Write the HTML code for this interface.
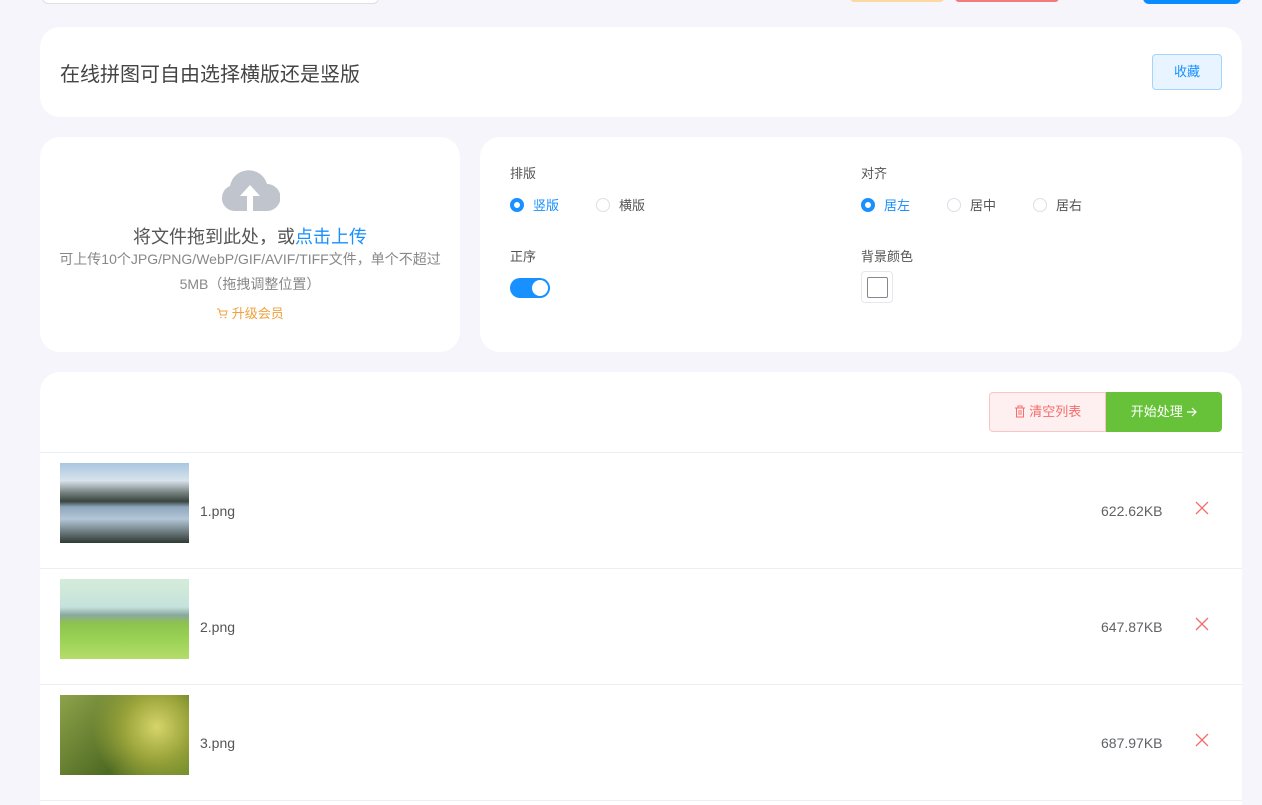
<!DOCTYPE html>
<html><head><meta charset="utf-8"><style>
*{box-sizing:border-box;margin:0;padding:0}
html{width:1262px;height:805px;overflow:hidden}
body{width:1262px;height:805px;overflow:hidden;background:#f5f5fb;font-family:"Liberation Sans","Noto Sans CJK SC",sans-serif;color:#333;position:relative}
.a{position:absolute}
.card{position:absolute;background:#fff;border-radius:20px}
.lbl{font-size:13px;color:#555}
.radio{position:absolute;font-size:13px;color:#555;display:flex;align-items:center;gap:9px}
.radio i{display:inline-block;width:14px;height:14px;border-radius:50%;border:1px solid #dcdfe6;background:#fff}
.radio.on{color:#1890ff}
.radio.on i{border:4px solid #1890ff;background:#fff}
.row{position:absolute;left:40px;width:1202px;height:116px;border-top:1px solid #ebeef5;background:#fff}
.row .img{position:absolute;left:20px;top:10px;width:129px;height:80px}
.row .nm{position:absolute;left:160px;top:50px;font-size:14px;color:#555}
.row .sz{position:absolute;left:1061px;top:50px;font-size:14px;color:#606266}
.row .x{position:absolute;left:1155px;top:48px}
</style></head><body>
<div class="a" style="left:42px;top:-20px;width:337px;height:24px;border:1px solid #dcdfe6;border-radius:6px;background:#fff"></div>
<div class="a" style="left:850px;top:-10px;width:94px;height:12px;background:#fcd9a2;border-radius:4px"></div>
<div class="a" style="left:955px;top:-10px;width:104px;height:12px;background:#f17a7a;border-radius:4px"></div>
<div class="a" style="left:1143px;top:-10px;width:98px;height:14px;background:#0a8cff;border-radius:6px"></div>

<div class="card" style="left:40px;top:27px;width:1202px;height:90px">
  <div class="a" style="left:20px;top:31px;font-size:20px;color:#444">在线拼图可自由选择横版还是竖版</div>
  <div class="a" style="left:1112px;top:27px;width:70px;height:36px;border:1px solid #a3d3ff;background:#e8f4ff;border-radius:4px;color:#1890ff;font-size:13px;text-align:center;line-height:34px">收藏</div>
</div>

<div class="card" style="left:40px;top:137px;width:420px;height:215px">
  <svg class="a" style="left:180px;top:30px" width="60" height="46" viewBox="0 0 60 46"><path d="M14 44 A13 13 0 0 1 10 19 A19 19 0 0 1 47 17 A13.5 13.5 0 0 1 47 44 Z" fill="#c0c4cc"/><path d="M30 18 L20 29 H27 V46 H33 V29 H40 Z" fill="#fff"/></svg>
  <div class="a" style="left:0;width:420px;top:86px;text-align:center;font-size:18px;color:#555">将文件拖到此处，或<span style="color:#1890ff">点击上传</span></div>
  <div class="a" style="left:0;width:420px;top:110px;text-align:center;font-size:14px;color:#888;line-height:25px">可上传10个JPG/PNG/WebP/GIF/AVIF/TIFF文件，单个不超过<br>5MB（拖拽调整位置）</div>
  <div class="a" style="left:0;width:420px;top:166px;text-align:center;font-size:13px;color:#f0a03c"><svg width="12" height="12" viewBox="0 0 12 12" style="vertical-align:-1px"><path d="M1 2H3L4.5 8H10L11 4H4" fill="none" stroke="#f0a03c" stroke-width="1"/><circle cx="5" cy="10.5" r=".8" fill="#f0a03c"/><circle cx="9.5" cy="10.5" r=".8" fill="#f0a03c"/></svg> 升级会员</div>
</div>

<div class="card" style="left:480px;top:137px;width:762px;height:215px">
  <div class="a lbl" style="left:30px;top:26px">排版</div>
  <div class="radio on" style="left:30px;top:58px"><i></i>竖版</div>
  <div class="radio" style="left:116px;top:58px"><i></i>横版</div>
  <div class="a lbl" style="left:30px;top:109px">正序</div>
  <div class="a" style="left:30px;top:141px;width:40px;height:20px;border-radius:10px;background:#1890ff"><div class="a" style="left:22px;top:2px;width:16px;height:16px;border-radius:50%;background:#fff"></div></div>
  <div class="a lbl" style="left:381px;top:26px">对齐</div>
  <div class="radio on" style="left:381px;top:58px"><i></i>居左</div>
  <div class="radio" style="left:467px;top:58px"><i></i>居中</div>
  <div class="radio" style="left:553px;top:58px"><i></i>居右</div>
  <div class="a lbl" style="left:381px;top:109px">背景颜色</div>
  <div class="a" style="left:381px;top:134px;width:32px;height:32px;border:1px solid #e4e7ed;border-radius:4px;background:#fff"><div class="a" style="left:5px;top:5px;width:21px;height:21px;border:1px solid #888;border-radius:2px"></div></div>
</div>

<div class="card" style="left:40px;top:372px;width:1202px;height:433px;border-radius:20px 20px 0 0">
  <div class="a" style="left:949px;top:20px;width:117px;height:40px;border:1px solid #fbc4c4;background:#fef0f0;border-radius:4px 0 0 4px;color:#f56c6c;font-size:13px;line-height:38px;text-align:center"><svg width="12" height="13" viewBox="0 0 12 13" style="vertical-align:-2px"><path d="M1 3H11M4 3V1H8V3M2.5 3V12H9.5V3M5 5V10M7 5V10" fill="none" stroke="#f56c6c" stroke-width="1"/></svg> 清空列表</div>
  <div class="a" style="left:1066px;top:20px;width:116px;height:40px;background:#67c23a;border-radius:0 4px 4px 0;color:#fff;font-size:13px;line-height:40px;text-align:center">开始处理 <svg width="11" height="10" viewBox="0 0 11 10" style="vertical-align:-1px"><path d="M1 5H10M6 1L10 5L6 9" fill="none" stroke="#fff" stroke-width="1.2"/></svg></div>
</div>

<div class="row" style="top:452px">
  <div class="img" style="background:linear-gradient(180deg,#a9c6e0 0%,#d8e3ec 22%,#6f7c78 38%,#3a4540 48%,#8fa6bb 55%,#b4c7d8 70%,#2f3a33 100%)"></div>
  <div class="nm">1.png</div><div class="sz">622.62KB</div>
  <svg class="x" width="14" height="14"><path d="M1 1L13 13M13 1L1 13" stroke="#f56c6c" stroke-width="1.3"/></svg>
</div>
<div class="row" style="top:568px">
  <div class="img" style="background:linear-gradient(180deg,#d4ecd9 0%,#c6e2dc 35%,#8aa7a0 45%,#8cc24e 55%,#9ad255 75%,#b5dc6a 100%)"></div>
  <div class="nm">2.png</div><div class="sz">647.87KB</div>
  <svg class="x" width="14" height="14"><path d="M1 1L13 13M13 1L1 13" stroke="#f56c6c" stroke-width="1.3"/></svg>
</div>
<div class="row" style="top:684px">
  <div class="img" style="background:radial-gradient(circle at 75% 40%,#d6d46a 0,#9aa43a 30%,transparent 60%),linear-gradient(135deg,#8ea24a,#4e6a22 60%,#6c8a2a)"></div>
  <div class="nm">3.png</div><div class="sz">687.97KB</div>
  <svg class="x" width="14" height="14"><path d="M1 1L13 13M13 1L1 13" stroke="#f56c6c" stroke-width="1.3"/></svg>
</div>
<div class="row" style="top:800px;height:5px"></div>
</body></html>
